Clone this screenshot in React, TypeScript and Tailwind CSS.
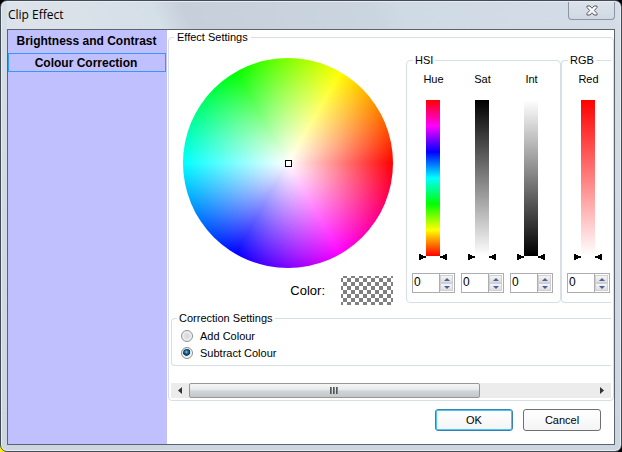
import type { ReactNode } from "react";

const groupBorder = "min-w-0 border border-[#d5dfe5]";

function TrackArrow({ flip = false }: { flip?: boolean }) {
  return (
    <svg viewBox="0 0 7 8" className="h-2 w-[7px] self-end" shapeRendering="crispEdges" aria-hidden="true">
      <path d={flip ? "M7 1v6H5V6H3V5H0V3h3V2h2V1z" : "M0 1v6h2V6h2V5h3V3H4V2H2V1z"} />
    </svg>
  );
}

function StepButton({ label, down = false }: { label: string; down?: boolean }) {
  return (
    <button
      type="button"
      aria-label={label}
      className="flex h-2 w-[13px] items-center justify-center border border-[#d0d0d4] bg-linear-to-b from-[#f6f6f6] to-[#dddddf]"
    >
      <svg viewBox="0 0 6 3" className="h-[3px] w-[6px]" aria-hidden="true">
        <path fill="#4a5f9e" d={down ? "M0 0h6L3 3z" : "M0 3h6L3 0z"} />
      </svg>
    </button>
  );
}

function Channel({ name, track }: { name: string; track: string }) {
  const id = `channel-${name.toLowerCase()}`;
  return (
    <div className="flex w-[43px] shrink-0 flex-col">
      <label htmlFor={id} className="h-[14px] text-center">
        {name}
      </label>
      <div className="mt-[14px] ml-[7px] flex h-[161px]">
        <TrackArrow />
        <div className={`h-[156px] w-[14px] ${track}`} />
        <TrackArrow flip />
      </div>
      <div className="mt-3 flex h-5 w-full border border-[#abadb3] bg-white">
        <input id={id} defaultValue="0" className="h-4 w-full min-w-0 flex-1 px-px text-[12px] outline-none" />
        <div className="flex w-[15px] shrink-0 flex-col justify-between border-l border-[#abadb3] py-px pr-px">
          <StepButton label={`Increase ${name}`} />
          <StepButton label={`Decrease ${name}`} down />
        </div>
      </div>
    </div>
  );
}

function Choice({ children, checked = false }: { children: ReactNode; checked?: boolean }) {
  return (
    <label className="flex h-[17px] items-center gap-[7px]">
      <input
        type="radio"
        name="correction"
        defaultChecked={checked}
        className="size-3 appearance-none rounded-full border border-[#8e8f8f] bg-radial from-[#d4d6d8] to-[#f6f6f6] shadow-[inset_0_0_0_1px_#f4f4f4] checked:bg-[radial-gradient(circle_at_45%_40%,#7fd4f5_0,#1c6a96_20%,#0c2e48_42%,#e6eaec_50%)]"
      />
      {children}
    </label>
  );
}

export default function App() {
  return (
    <div className="flex min-h-screen flex-col bg-[conic-gradient(#000_50%,#fe0_0_75%,#000_0)] font-['Liberation_Sans',Arial,sans-serif] text-[11px] leading-[14px] text-black">
      <div className="flex flex-1 flex-col rounded-[7px] border border-[#454b54] bg-linear-to-b from-[#d5dde6] to-[#ccd6e1] px-[6px] pb-[6px] shadow-[inset_0_0_0_1px_#e6ecf2]">
        <header className="mt-px flex h-[27px] items-start justify-between bg-[linear-gradient(65deg,#dde3ea_0%,#d5dfe8_25%,#c6cfda_30%,#cbd5e0_60%,#d0dae5_65%,#d3dce6_100%)]">
          <h1 className="pt-[5px] pl-px font-['Open_Sans','Noto_Sans',sans-serif] text-[12px] leading-4">Clip Effect</h1>
          <button
            type="button"
            aria-label="Close"
            className="flex h-[18px] w-[47px] items-center justify-center rounded-b-[4px] border border-t-0 border-[#8e96a3] bg-linear-to-b from-[#dbe2ea] to-[#d0d9e3]"
          >
            <svg viewBox="0 0 12 11" className="h-[11px] w-3" aria-hidden="true">
              <path
                d="M1 1h3l2 2.300L8 1h3v1.500L8.300 5.500 11 8.500V10H8L6 7.700 4 10H1V8.500l2.700-3L1 2.500z"
                fill="#fff"
                stroke="#565867"
                strokeLinejoin="round"
              />
            </svg>
          </button>
        </header>

        <div className="flex flex-1 border border-[#5c636d] bg-white">
          <nav className="w-[159px] shrink-0 bg-[#c0c0ff] text-[12px] font-bold">
            <button type="button" className="mb-[2px] block h-[21px] w-[157px] text-center">
              Brightness and Contrast
            </button>
            <button
              type="button"
              aria-current="true"
              className="block h-[19px] w-[158px] border border-[#3399ff] pt-[2px] pr-[2px] text-center leading-[15px]"
            >
              Colour Correction
            </button>
          </nav>

          <main className="flex min-w-0 flex-1 flex-col pl-px">
            <fieldset className={`${groupBorder} rounded-[4px] px-[2px] pb-[2px]`}>
              <legend className="ml-[3px] px-[3px]">Effect Settings</legend>

              <div className="flex items-start overflow-hidden pt-[9px]">
                <div className="w-[235px] shrink-0 pt-[5px] pl-3">
                  <div className="flex size-[210px] items-center justify-center rounded-full bg-[radial-gradient(closest-side,#fff,transparent),conic-gradient(from_90deg,#f00,#f0f,#00f,#0ff,#0f0,#ff0,#f00)]">
                    <div className="size-[7px] border border-black bg-white" />
                  </div>
                  <div className="mt-2 flex w-[210px] items-center justify-end gap-4 text-[13px]">
                    <span>Color:</span>
                    <div className="h-[29px] w-[52px] bg-[conic-gradient(#fff_25%,#808080_0_50%,#fff_0_75%,#808080_0)] bg-[length:8px_8px] bg-[position:2px_-2px]" />
                  </div>
                </div>

                <fieldset className={`${groupBorder} w-[155px] shrink-0 rounded-[4px] px-[5px] pb-[9px]`}>
                  <legend className="ml-px px-[2px]">HSI</legend>
                  <div className="flex gap-[6px] pt-[5px]">
                    <Channel name="Hue" track="bg-[linear-gradient(#f00,#f0f,#00f,#0ff,#0f0,#ff0,#f00)]" />
                    <Channel name="Sat" track="bg-[linear-gradient(#000,#fff)]" />
                    <Channel name="Int" track="bg-[linear-gradient(#fff,#000)]" />
                  </div>
                </fieldset>

                <fieldset className={`${groupBorder} flex-1 rounded-l-[4px] border-r-0 pb-[9px] pl-[5px]`}>
                  <legend className="ml-px px-[2px]">RGB</legend>
                  <div className="flex pt-[5px]">
                    <Channel name="Red" track="bg-[linear-gradient(#f00,#fff)]" />
                  </div>
                </fieldset>
              </div>

              <fieldset className={`${groupBorder} mt-[6px] rounded-l-[4px] border-r-0 pb-1 pl-[9px]`}>
                <legend className="-ml-1 px-[2px]">Correction Settings</legend>
                <div className="pt-[2px]">
                  <Choice>Add Colour</Choice>
                  <Choice checked>Subtract Colour</Choice>
                </div>
              </fieldset>

              <div className="mt-[17px] flex h-[15px] bg-[#ececec]">
                <button type="button" aria-label="Scroll left" className="flex w-[18px] items-center justify-center">
                  <svg viewBox="0 0 4 7" className="h-[7px] w-1" aria-hidden="true">
                    <path d="M4 0v7L0 3.500z" fill="#333" />
                  </svg>
                </button>
                <div className="flex-1">
                  <div className="flex h-full w-[72%] items-center justify-center gap-px rounded-[2px] border border-[#979797] bg-[linear-gradient(#f6f6f6,#e6e8ea_45%,#d2d6d9_52%,#c2c7cb)]">
                    <i className="h-[7px] w-[2px] bg-linear-to-r from-[#444] to-[#999]" />
                    <i className="h-[7px] w-[2px] bg-linear-to-r from-[#444] to-[#999]" />
                    <i className="h-[7px] w-[2px] bg-linear-to-r from-[#444] to-[#999]" />
                  </div>
                </div>
                <button type="button" aria-label="Scroll right" className="flex w-[18px] items-center justify-center">
                  <svg viewBox="0 0 4 7" className="h-[7px] w-1" aria-hidden="true">
                    <path d="M0 0v7l4-3.500z" fill="#333" />
                  </svg>
                </button>
              </div>
            </fieldset>

            <footer className="flex justify-end gap-[10px] pt-2 pr-[13px]">
              <button
                type="button"
                className="h-[22px] w-[78px] rounded-[3px] border border-[#3c7fb1] bg-linear-to-b from-white to-[#f4f4f4] shadow-[inset_0_0_0_1px_#46c8f0]"
              >
                OK
              </button>
              <button
                type="button"
                className="h-[22px] w-[78px] rounded-[3px] border border-[#707070] bg-linear-to-b from-white to-[#f4f4f4]"
              >
                Cancel
              </button>
            </footer>
          </main>
        </div>
      </div>
    </div>
  );
}
